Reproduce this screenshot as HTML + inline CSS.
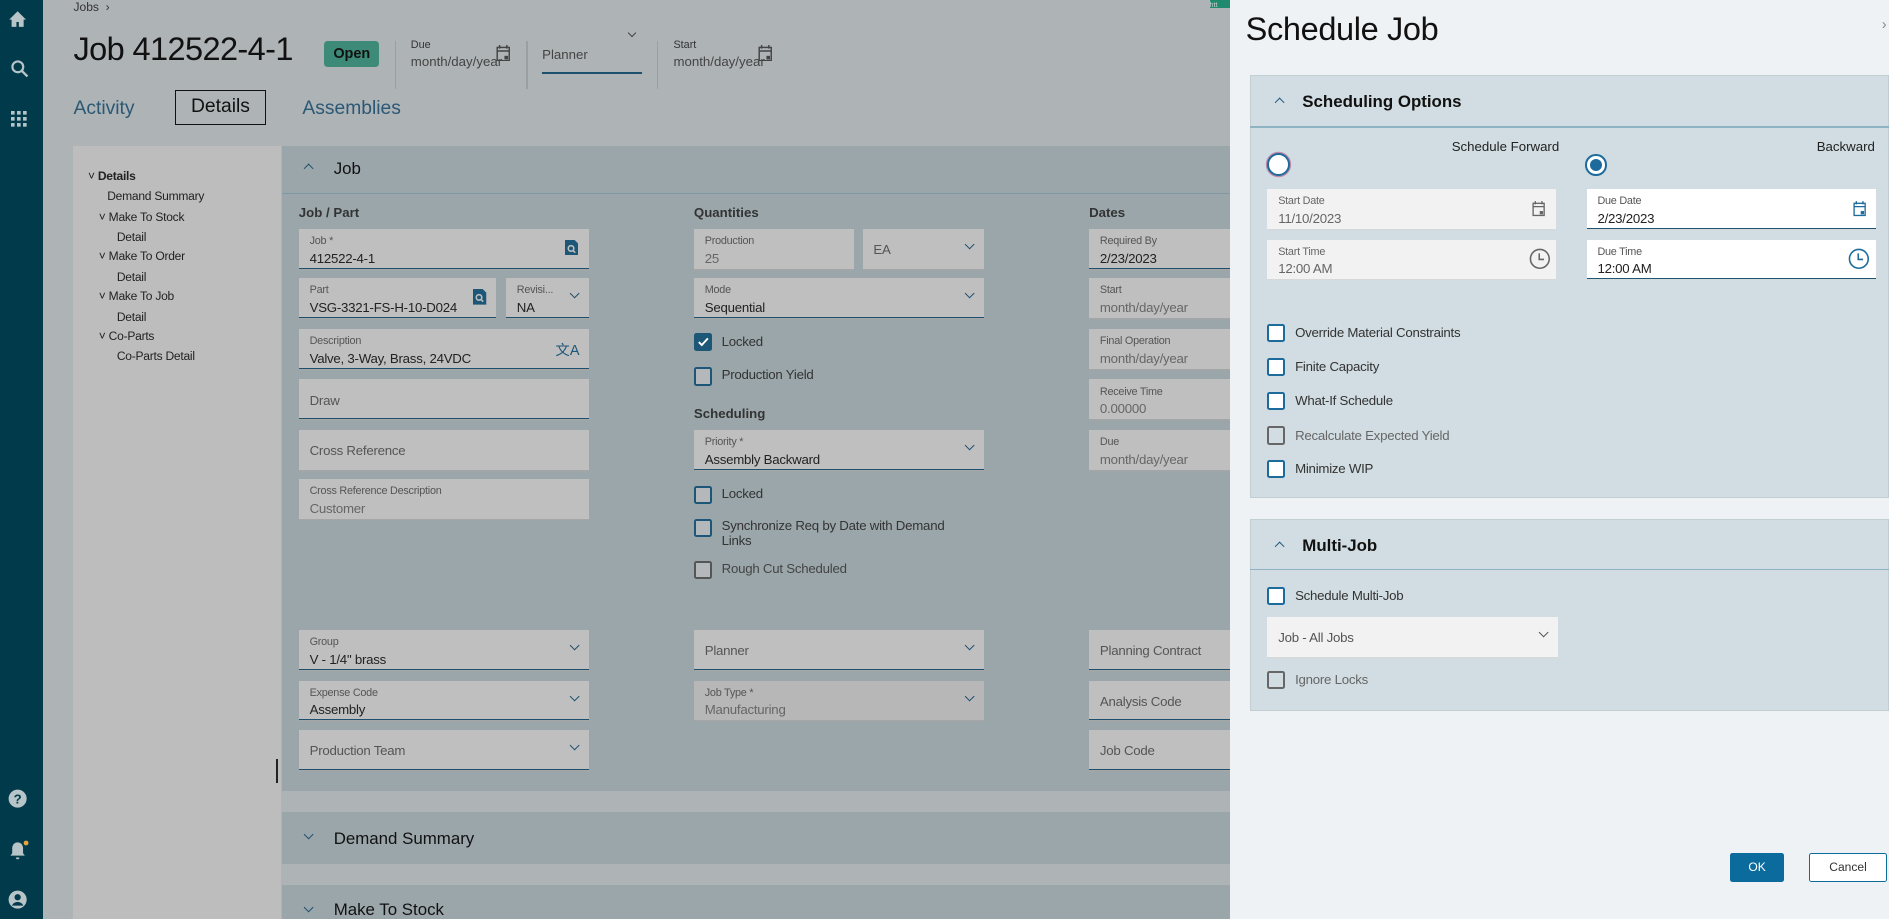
<!DOCTYPE html>
<html><head><meta charset="utf-8"><style>
*{box-sizing:border-box;margin:0;padding:0}
html,body{width:1889px;height:919px;overflow:hidden;background:#aeb3b6}
#w{position:relative;width:1568px;height:763px;zoom:1.20472;font-family:"Liberation Sans",sans-serif;color:#222;overflow:hidden}
.a{position:absolute}
.f{position:absolute;background:#bfbfbf;height:33px;box-shadow:0 1px 0 #a6a6a6}
.u{border-bottom:1.5px solid #1d4f6e}
.l{position:absolute;left:9px;top:5px;font-size:9px;color:#555;letter-spacing:-.2px}
.v{position:absolute;left:9px;top:18px;font-size:11px;color:#222;letter-spacing:-.2px;white-space:nowrap}
.g{color:#666}
.p{position:absolute;left:9px;top:11px;font-size:11px;color:#555;letter-spacing:-.2px;white-space:nowrap}
.dd{position:absolute;right:9px;top:10px;width:6px;height:6px;border-right:1.5px solid #1d4f6e;border-bottom:1.5px solid #1d4f6e;transform:rotate(45deg)}
.cb{position:absolute;width:15px;height:15px;border:2px solid #1d5778;border-radius:2px;background:#b4b8ba}
.ck{font-size:11px;color:#333;position:absolute;letter-spacing:-.2px}
.rf{position:absolute;height:33px;box-shadow:0 1px 0 #d6d9da}
.rcb{position:absolute;width:15px;height:15px;border:2px solid #1c6b9c;border-radius:2px;background:#fff}
.rck{position:absolute;font-size:11px;color:#333;letter-spacing:-.2px}
.tree div{position:absolute;font-size:10px;color:#222;white-space:nowrap;letter-spacing:-.2px}
</style></head><body><div id="w">
<div class="a" style="left:0;top:0;width:36px;height:763px;background:#013a4a"></div>
<svg class="a" style="left:7px;top:8px" width="16" height="16" viewBox="0 0 16 16"><path d="M8 1L1 8h2v6h4v-4h2v4h4V8h2z" fill="#b7c4c8"/></svg>
<svg class="a" style="left:8px;top:49px" width="16" height="16" viewBox="0 0 16 16"><circle cx="6.5" cy="6.5" r="4.5" fill="none" stroke="#b7c4c8" stroke-width="1.8"/><path d="M10 10l4.5 4.5" stroke="#b7c4c8" stroke-width="2"/></svg>
<svg class="a" style="left:9px;top:92px" width="14" height="14" viewBox="0 0 14 14" fill="#b7c4c8"><rect x="0" y="0" width="3" height="3"/><rect x="5" y="0" width="3" height="3"/><rect x="10" y="0" width="3" height="3"/><rect x="0" y="5" width="3" height="3"/><rect x="5" y="5" width="3" height="3"/><rect x="10" y="5" width="3" height="3"/><rect x="0" y="10" width="3" height="3"/><rect x="5" y="10" width="3" height="3"/><rect x="10" y="10" width="3" height="3"/></svg>
<svg class="a" style="left:7px;top:655px" width="16" height="16" viewBox="0 0 16 16"><circle cx="8" cy="8" r="7.5" fill="#b7c4c8"/><text x="8" y="12" font-size="11" font-weight="bold" text-anchor="middle" fill="#013a4a" font-family="Liberation Sans">?</text></svg>
<svg class="a" style="left:7px;top:697px" width="18" height="18" viewBox="0 0 18 18"><path d="M8 2c-3 0-4.5 2.5-4.5 5v4L2 13h12l-1.5-2V7C12.5 4.5 11 2 8 2z M6.5 14.5a1.5 1.5 0 003 0z" fill="#b7c4c8"/><circle cx="15" cy="2.5" r="2" fill="#e8a23a"/></svg>
<svg class="a" style="left:7px;top:739px" width="16" height="16" viewBox="0 0 16 16"><circle cx="8" cy="8" r="7.5" fill="#b7c4c8"/><circle cx="8" cy="6" r="2.6" fill="#013a4a"/><path d="M3.3 13c1-2.2 2.7-3 4.7-3s3.7.8 4.7 3" fill="#013a4a"/></svg>

<div class="a" style="left:61px;top:0;font-size:10px;color:#333">Jobs &nbsp;›</div>
<div class="a" style="left:61px;top:26px;font-size:27px;color:#111;letter-spacing:-.5px">Job 412522-4-1</div>
<div class="a" style="left:269px;top:34px;width:46px;height:22px;background:#3e8a79;border-radius:3px;font-size:12px;font-weight:bold;color:#111;text-align:center;line-height:22px">Open</div>
<div class="a" style="left:328px;top:34px;width:1px;height:40px;background:#9a9fa2"></div>
<div class="a" style="left:341px;top:32px;font-size:9px;color:#333">Due</div>
<div class="a" style="left:341px;top:45px;font-size:11px;color:#444">month/day/year</div>
<svg class="a" style="left:412px;top:37px" width="12" height="14" viewBox="0 0 12 14"><rect x="1" y="2" width="10" height="11" fill="none" stroke="#444" stroke-width="1.2"/><path d="M1 5h10M3 0v3M9 0v3" stroke="#444" stroke-width="1.2"/><rect x="7" y="9" width="3" height="3" fill="#444"/></svg>
<div class="a" style="left:437px;top:34px;width:1px;height:40px;background:#9a9fa2"></div>
<div class="a" style="left:450px;top:39px;font-size:11px;color:#444">Planner</div>
<div class="a" style="left:450px;top:60px;width:83px;height:1.5px;background:#1d4f6e"></div>
<div class="a" style="left:522px;top:25px;width:5px;height:5px;border-right:1.3px solid #444;border-bottom:1.3px solid #444;transform:rotate(45deg)"></div>
<div class="a" style="left:545px;top:34px;width:1px;height:40px;background:#9a9fa2"></div>
<div class="a" style="left:559px;top:32px;font-size:9px;color:#333">Start</div>
<div class="a" style="left:559px;top:45px;font-size:11px;color:#444">month/day/year</div>
<svg class="a" style="left:629px;top:37px" width="12" height="14" viewBox="0 0 12 14"><rect x="1" y="2" width="10" height="11" fill="none" stroke="#444" stroke-width="1.2"/><path d="M1 5h10M3 0v3M9 0v3" stroke="#444" stroke-width="1.2"/><rect x="7" y="9" width="3" height="3" fill="#444"/></svg>
<div class="a" style="left:1004px;top:0;width:17px;height:7px;background:#1f8a6e;font-size:6px;color:#ccc">htt</div>

<div class="a" style="left:61px;top:81px;font-size:16px;color:#2b5874">Activity</div>
<div class="a" style="left:145px;top:75px;width:76px;height:29px;border:1.3px solid #111;font-size:16px;color:#111;text-align:center;line-height:26px">Details</div>
<div class="a" style="left:251px;top:81px;font-size:16px;color:#2b5874">Assemblies</div>

<div class="a" style="left:61px;top:121px;width:172px;height:642px;background:#bdbdbd"></div>
<div class="tree">
<div style="left:73px;top:140px">˅ <b style="font-weight:bold">Details</b></div>
<div style="left:89px;top:157px">Demand Summary</div>
<div style="left:82px;top:174px">˅ Make To Stock</div>
<div style="left:97px;top:191px">Detail</div>
<div style="left:82px;top:207px">˅ Make To Order</div>
<div style="left:97px;top:224px">Detail</div>
<div style="left:82px;top:240px">˅ Make To Job</div>
<div style="left:97px;top:257px">Detail</div>
<div style="left:82px;top:273px">˅ Co-Parts</div>
<div style="left:97px;top:290px">Co-Parts Detail</div>
</div>
<div class="a" style="left:229px;top:630px;width:2px;height:20px;background:#222"></div>

<div class="a" style="left:234px;top:121px;width:787px;height:536px;background:#9ba6aa"></div>
<div class="a" style="left:234px;top:160px;width:787px;height:1px;background:#7f9aa6"></div>
<div class="a" style="left:253px;top:137px;width:6px;height:6px;border-left:1.5px solid #1d4f6e;border-top:1.5px solid #1d4f6e;transform:rotate(45deg)"></div>
<div class="a" style="left:277px;top:132px;font-size:14px;color:#111">Job</div>
<div class="a" style="left:248px;top:170px;font-size:11px;font-weight:bold;color:#333">Job / Part</div>
<div class="a" style="left:576px;top:170px;font-size:11px;font-weight:bold;color:#333">Quantities</div>
<div class="a" style="left:904px;top:170px;font-size:11px;font-weight:bold;color:#333">Dates</div>

<div class="f u" style="left:248px;top:190px;width:241px"><div class="l">Job *</div><div class="v">412522-4-1</div><svg class="a" style="right:9px;top:9px" width="11" height="13" viewBox="0 0 11 13"><path d="M0 0h8l3 3v10H0z" fill="#1d5778"/><circle cx="5" cy="7" r="2.3" fill="none" stroke="#bfbfbf" stroke-width="1.3"/><path d="M6.5 8.5l2 2" stroke="#bfbfbf" stroke-width="1.3"/></svg></div>
<div class="f u" style="left:248px;top:231px;width:164px"><div class="l">Part</div><div class="v">VSG-3321-FS-H-10-D024</div><svg class="a" style="right:8px;top:9px" width="11" height="13" viewBox="0 0 11 13"><path d="M0 0h8l3 3v10H0z" fill="#1d5778"/><circle cx="5" cy="7" r="2.3" fill="none" stroke="#bfbfbf" stroke-width="1.3"/><path d="M6.5 8.5l2 2" stroke="#bfbfbf" stroke-width="1.3"/></svg></div>
<div class="f u" style="left:420px;top:231px;width:69px"><div class="l">Revisi...</div><div class="v">NA</div><div class="dd"></div></div>
<div class="f u" style="left:248px;top:273px;width:241px"><div class="l">Description</div><div class="v">Valve, 3-Way, Brass, 24VDC</div><div class="a" style="right:8px;top:8px;font-size:12px;color:#1d5778">文A</div></div>
<div class="f u" style="left:248px;top:315px;width:241px"><div class="p">Draw</div></div>
<div class="f" style="left:248px;top:357px;width:241px"><div class="p">Cross Reference</div></div>
<div class="f" style="left:248px;top:398px;width:241px"><div class="l">Cross Reference Description</div><div class="v g">Customer</div></div>
<div class="f u" style="left:248px;top:523px;width:241px"><div class="l">Group</div><div class="v">V - 1/4" brass</div><div class="dd"></div></div>
<div class="f u" style="left:248px;top:565px;width:241px"><div class="l">Expense Code</div><div class="v">Assembly</div><div class="dd"></div></div>
<div class="f u" style="left:248px;top:606px;width:241px"><div class="p">Production Team</div><div class="dd"></div></div>

<div class="f" style="left:576px;top:190px;width:133px"><div class="l">Production</div><div class="v g">25</div></div>
<div class="f" style="left:716px;top:190px;width:101px"><div class="p">EA</div><div class="dd"></div></div>
<div class="f u" style="left:576px;top:231px;width:241px"><div class="l">Mode</div><div class="v">Sequential</div><div class="dd"></div></div>
<div class="cb" style="left:576px;top:276px;background:#1d5778"><svg class="a" style="left:1px;top:1px" width="10" height="10" viewBox="0 0 10 10"><path d="M1.5 5l2.5 2.5 5-5.5" fill="none" stroke="#fff" stroke-width="1.6"/></svg></div><div class="ck" style="left:599px;top:277px">Locked</div>
<div class="cb" style="left:576px;top:305px"></div><div class="ck" style="left:599px;top:305px">Production Yield</div>
<div class="a" style="left:576px;top:337px;font-size:11px;font-weight:bold;color:#333">Scheduling</div>
<div class="f u" style="left:576px;top:357px;width:241px"><div class="l">Priority *</div><div class="v">Assembly Backward</div><div class="dd"></div></div>
<div class="cb" style="left:576px;top:403px"></div><div class="ck" style="left:599px;top:403px">Locked</div>
<div class="cb" style="left:576px;top:431px"></div><div class="ck" style="left:599px;top:431px;line-height:12px">Synchronize Req by Date with Demand<br>Links</div>
<div class="cb" style="left:576px;top:466px;border-color:#555"></div><div class="ck" style="left:599px;top:466px;color:#444">Rough Cut Scheduled</div>
<div class="f u" style="left:576px;top:523px;width:241px"><div class="p">Planner</div><div class="dd"></div></div>
<div class="f" style="left:576px;top:565px;width:241px;background:#b7b7b7"><div class="l">Job Type *</div><div class="v g">Manufacturing</div><div class="dd"></div></div>

<div class="f u" style="left:904px;top:190px;width:117px"><div class="l">Required By</div><div class="v">2/23/2023</div></div>
<div class="f" style="left:904px;top:231px;width:117px"><div class="l">Start</div><div class="v g">month/day/year</div></div>
<div class="f" style="left:904px;top:273px;width:117px"><div class="l">Final Operation</div><div class="v g">month/day/year</div></div>
<div class="f" style="left:904px;top:315px;width:117px"><div class="l">Receive Time</div><div class="v g">0.00000</div></div>
<div class="f" style="left:904px;top:357px;width:117px"><div class="l">Due</div><div class="v g">month/day/year</div></div>
<div class="f u" style="left:904px;top:523px;width:117px"><div class="p">Planning Contract</div></div>
<div class="f u" style="left:904px;top:565px;width:117px"><div class="p">Analysis Code</div></div>
<div class="f u" style="left:904px;top:606px;width:117px"><div class="p">Job Code</div></div>

<div class="a" style="left:234px;top:674px;width:787px;height:43px;background:#9ba6aa"></div>
<div class="a" style="left:253px;top:690px;width:6px;height:6px;border-right:1.5px solid #1d4f6e;border-bottom:1.5px solid #1d4f6e;transform:rotate(45deg)"></div>
<div class="a" style="left:277px;top:688px;font-size:14px;color:#111">Demand Summary</div>
<div class="a" style="left:234px;top:735px;width:787px;height:30px;background:#9ba6aa"></div>
<div class="a" style="left:253px;top:750px;width:6px;height:6px;border-right:1.5px solid #1d4f6e;border-bottom:1.5px solid #1d4f6e;transform:rotate(45deg)"></div>
<div class="a" style="left:277px;top:747px;font-size:14px;color:#111">Make To Stock</div>

<div class="a" style="left:1021px;top:0;width:547px;height:763px;background:#eef2f5"></div>
<div class="a" style="left:1034px;top:9px;font-size:27px;color:#111;letter-spacing:-.3px">Schedule Job</div>
<div class="a" style="left:1562px;top:14px;font-size:12px;color:#888">›</div>

<div class="a" style="left:1038px;top:62px;width:530px;height:351px;background:#d1dde2;border:1px solid #c3ced3"></div>
<div class="a" style="left:1038px;top:105px;width:530px;height:1px;background:#8fb3c3"></div>
<div class="a" style="left:1059px;top:82px;width:6px;height:6px;border-left:1.5px solid #1d5778;border-top:1.5px solid #1d5778;transform:rotate(45deg)"></div>
<div class="a" style="left:1081px;top:76px;font-size:14px;font-weight:bold;color:#111">Scheduling Options</div>
<div class="a" style="left:1205px;top:115px;font-size:11px;color:#222">Schedule Forward</div>
<div class="a" style="left:1508px;top:115px;font-size:11px;color:#222">Backward</div>
<div class="a" style="left:1052px;top:127px;width:19px;height:19px;border-radius:50%;border:2px solid #1c6b9c;background:#fff;box-shadow:0 0 0 1px #c08aa8"></div>
<div class="a" style="left:1316px;top:128px;width:18px;height:18px;border-radius:50%;border:2px solid #1c6b9c;background:#fff"><div class="a" style="left:2px;top:2px;width:10px;height:10px;border-radius:50%;background:#1c6b9c"></div></div>

<div class="rf" style="left:1052px;top:157px;width:240px;background:#f2f2f2"><div class="l" style="color:#666">Start Date</div><div class="v" style="color:#666">11/10/2023</div><svg class="a" style="right:9px;top:10px" width="11" height="13" viewBox="0 0 12 14"><rect x="1" y="2" width="10" height="11" fill="none" stroke="#666" stroke-width="1.2"/><path d="M1 5h10M3 0v3M9 0v3" stroke="#666" stroke-width="1.2"/><rect x="7" y="9" width="3" height="3" fill="#666"/></svg></div>
<div class="rf" style="left:1052px;top:199px;width:240px;background:#f2f2f2"><div class="l" style="color:#666">Start Time</div><div class="v" style="color:#666">12:00 AM</div><svg class="a" style="right:5px;top:7px" width="18" height="18" viewBox="0 0 18 18"><circle cx="9" cy="9" r="7.8" fill="none" stroke="#666" stroke-width="1.3"/><path d="M8.5 4.5v5h4" fill="none" stroke="#666" stroke-width="1.3"/></svg></div>
<div class="rf" style="left:1317px;top:157px;width:240px;background:#fff;border-bottom:1.5px solid #1d5778"><div class="l">Due Date</div><div class="v">2/23/2023</div><svg class="a" style="right:8px;top:10px" width="11" height="13" viewBox="0 0 12 14"><rect x="1" y="2" width="10" height="11" fill="none" stroke="#1c6b9c" stroke-width="1.2"/><path d="M1 5h10M3 0v3M9 0v3" stroke="#1c6b9c" stroke-width="1.2"/><rect x="7" y="9" width="3" height="3" fill="#1c6b9c"/></svg></div>
<div class="rf" style="left:1317px;top:199px;width:240px;background:#fff;border-bottom:1.5px solid #1d5778"><div class="l">Due Time</div><div class="v">12:00 AM</div><svg class="a" style="right:5px;top:7px" width="18" height="18" viewBox="0 0 18 18"><circle cx="9" cy="9" r="7.8" fill="none" stroke="#1c6b9c" stroke-width="1.3"/><path d="M8.5 4.5v5h4" fill="none" stroke="#1c6b9c" stroke-width="1.3"/></svg></div>

<div class="rcb" style="left:1052px;top:269px"></div><div class="rck" style="left:1075px;top:270px">Override Material Constraints</div>
<div class="rcb" style="left:1052px;top:297px"></div><div class="rck" style="left:1075px;top:298px">Finite Capacity</div>
<div class="rcb" style="left:1052px;top:325px"></div><div class="rck" style="left:1075px;top:326px">What-If Schedule</div>
<div class="rcb" style="left:1052px;top:354px;border-color:#666;background:#d1dde2"></div><div class="rck" style="left:1075px;top:355px;color:#666">Recalculate Expected Yield</div>
<div class="rcb" style="left:1052px;top:382px"></div><div class="rck" style="left:1075px;top:383px">Minimize WIP</div>

<div class="a" style="left:1038px;top:431px;width:530px;height:159px;background:#d1dde2;border:1px solid #c3ced3"></div>
<div class="a" style="left:1038px;top:472px;width:530px;height:1px;background:#8fb3c3"></div>
<div class="a" style="left:1059px;top:451px;width:6px;height:6px;border-left:1.5px solid #1d5778;border-top:1.5px solid #1d5778;transform:rotate(45deg)"></div>
<div class="a" style="left:1081px;top:445px;font-size:14px;font-weight:bold;color:#111">Multi-Job</div>
<div class="rcb" style="left:1052px;top:487px"></div><div class="rck" style="left:1075px;top:488px">Schedule Multi-Job</div>
<div class="rf" style="left:1052px;top:512px;width:241px;background:#f2f2f2"><div class="p" style="color:#555">Job - All Jobs</div><div class="dd" style="border-color:#555"></div></div>
<div class="rcb" style="left:1052px;top:557px;border-color:#666;background:#d1dde2"></div><div class="rck" style="left:1075px;top:558px;color:#666">Ignore Locks</div>

<div class="a" style="left:1436px;top:708px;width:45px;height:24px;background:#0c6b9d;border-radius:2px;color:#fff;font-size:10px;text-align:center;line-height:24px">OK</div>
<div class="a" style="left:1502px;top:708px;width:64px;height:24px;background:#fff;border:1.5px solid #0c6b9d;border-radius:2px;color:#333;font-size:10px;text-align:center;line-height:21px;padding-top:1px">Cancel</div>
</div></body></html>
